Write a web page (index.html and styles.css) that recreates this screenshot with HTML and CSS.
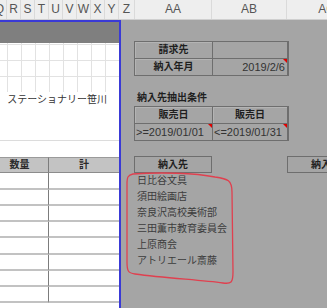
FILE: index.html
```html
<!DOCTYPE html>
<html lang="ja">
<head>
    <meta charset="UTF-8">
    <title>納入先</title>
    <link rel="stylesheet" href="styles.css">
</head>
<body>
    <div class="sheet">
        <div class="col-head">
            <div class="ch q">Q</div>
            <div class="ch">R</div>
            <div class="ch">S</div>
            <div class="ch">T</div>
            <div class="ch">U</div>
            <div class="ch">V</div>
            <div class="ch">W</div>
            <div class="ch">X</div>
            <div class="ch">Y</div>
            <div class="ch z">Z</div>
            <div class="ch aa">AA</div>
            <div class="ch ab">AB</div>
            <div class="ch ac">AC</div>
        </div>

        <div class="body">
            <div class="page">
                <div class="band"></div>
                <div class="grid-top"></div>
                <div class="shop-row">ステーショナリー笹川</div>
                <div class="blank"></div>
                <div class="blank2"></div>
                <div class="qty">
                    <div class="qh first">数量</div>
                    <div class="qh">計</div>
                    <div class="qc first"></div><div class="qc"></div>
                    <div class="qc first"></div><div class="qc"></div>
                    <div class="qc first"></div><div class="qc"></div>
                    <div class="qc first"></div><div class="qc"></div>
                    <div class="qc first"></div><div class="qc"></div>
                    <div class="qc first"></div><div class="qc"></div>
                    <div class="qc first"></div><div class="qc"></div>
                    <div class="qc first"></div><div class="qc"></div>
                </div>
            </div>

            <div class="outside">
                <div class="box box-bill">
                    <div class="cell label">請求先</div>
                    <div class="cell"></div>
                    <div class="cell label">納入年月</div>
                    <div class="cell num note">2019/2/6</div>
                </div>

                <div class="title">納入先抽出条件</div>

                <div class="box">
                    <div class="cell label">販売日</div>
                    <div class="cell label">販売日</div>
                    <div class="cell num left note">&gt;=2019/01/01</div>
                    <div class="cell num left note">&lt;=2019/01/31</div>
                </div>

                <div class="btn-row">
                    <div class="btn">納入先</div>
                    <div class="btn btn-ac">納入先</div>
                </div>

                <ul class="list">
                    <li>日比谷文具</li>
                    <li>須田絵画店</li>
                    <li>奈良沢高校美術部</li>
                    <li>三田薫市教育委員会</li>
                    <li>上原商会</li>
                    <li>アトリエール斎藤</li>
                </ul>
            </div>
        </div>

        <svg class="loop" width="327" height="308" viewBox="0 0 327 308">
            <path d="M133,174 C160,172 195,173 215,177 C228,179 232,180 232,192 L233,272 C233,283 231,284 223,283 C200,280 165,278 135,274 C128,273 127,271 127,262 L127,184 C127,177 128,175 133,174 Z"
                  fill="none" stroke="#e0404f" stroke-width="1.3"/>
        </svg>
    </div>
</body>
</html>
```

FILE: styles.css
```css
body {
    margin: 0;
    overflow: hidden;
    font-family: "Liberation Sans", "Noto Sans CJK JP", sans-serif;
}

.sheet {
    position: relative;
    width: 327px;
    height: 308px;
    overflow: hidden;
    background: #a5a5a5;
}

/* column letters */
.col-head {
    display: flex;
    height: 19px;
    background: #eeeeee;
    border-bottom: 1px solid #cfcfcf;
}

.ch {
    flex: none;
    width: 13px;
    border-right: 1px solid #dadada;
    font-size: 12px;
    line-height: 19px;
    text-align: center;
    color: #555;
}

.ch.q { margin-left: -7px; }
.ch.z { width: 15px; }
.ch.aa { width: 76px; }
.ch.ab { width: 74px; }
.ch.ac { width: 79px; }

.body {
    display: flex;
    height: 288px;
}

/* printable page */
.page {
    width: 119px;
    background: #fff;
    border-top: 2px solid #3a3ad6;
    border-right: 2px solid #3a3ad6;
}

.band {
    height: 21px;
    background: #7f7f7f;
}

.grid-top {
    height: 49px;
    background-image:
        linear-gradient(to right, #e2e2e2 1px, transparent 1px),
        linear-gradient(to bottom, #e2e2e2 1px, transparent 1px);
    background-size: 14px 100%, 100% 16px;
    background-position: 7px 0, 0 1px;
}

.shop-row {
    height: 16px;
    padding-right: 12px;
    font-size: 10px;
    line-height: 16px;
    text-align: right;
    color: #333;
    white-space: nowrap;
}

.blank {
    height: 32px;
    border-bottom: 1px solid #dcdcdc;
}

.blank2 {
    height: 16px;
}

.qty {
    display: grid;
    grid-template-columns: 49px 70px;
    grid-auto-rows: 16.25px;
}

.qh {
    background: #c3c3c3;
    border-top: 1px solid #9a9a9a;
    border-bottom: 1px solid #8c8c8c;
    font-size: 10px;
    font-weight: bold;
    line-height: 14px;
    text-align: center;
    color: #2a2a2a;
}

.qh.first {
    padding-right: 9px;
}

.first {
    border-right: 1px solid #7c7c7c;
}

.qc {
    box-sizing: border-box;
    border-bottom: 2px solid #c2c2c2;
}

/* area outside the page */
.outside {
    flex: 1;
    padding-left: 13px;
}

.box {
    display: grid;
    grid-template-columns: 77px 74px;
    grid-auto-rows: 16px;
    gap: 1px;
    width: 153px;
    padding: 1px;
    background: #6e6e6e;
}

.box-bill {
    margin-top: 21px;
}

.cell {
    position: relative;
    background: #a5a5a5;
    font-size: 10px;
    line-height: 16px;
    color: #333;
}

.cell.label {
    font-weight: bold;
    text-align: center;
    color: #1f1f1f;
    box-shadow: inset 1px 1px 0 #b4b4b4;
}

.cell.num {
    font-size: 11px;
    text-align: right;
    padding-right: 2px;
}

.cell.left {
    text-align: left;
    padding-left: 1px;
}

.cell.note::after {
    content: "";
    position: absolute;
    top: 0;
    right: 0;
    border-top: 4px solid #e00000;
    border-left: 4px solid transparent;
}

.title {
    height: 16px;
    margin-top: 14px;
    padding-left: 3px;
    font-size: 10px;
    font-weight: bold;
    line-height: 16px;
    color: #1f1f1f;
}

.btn-row {
    display: flex;
    gap: 75px;
    margin-top: 15px;
}

.btn {
    flex: none;
    width: 76px;
    height: 15px;
    border: 1px solid #6e6e6e;
    font-size: 10px;
    font-weight: bold;
    line-height: 15px;
    text-align: center;
    color: #1f1f1f;
}

.list {
    list-style: none;
    margin: 0;
    padding: 0 0 0 3px;
}

.list li {
    height: 16px;
    font-size: 10px;
    line-height: 16px;
    color: #3c3c3c;
    white-space: nowrap;
}

.loop {
    position: absolute;
    top: 0;
    left: 0;
    pointer-events: none;
}
```
